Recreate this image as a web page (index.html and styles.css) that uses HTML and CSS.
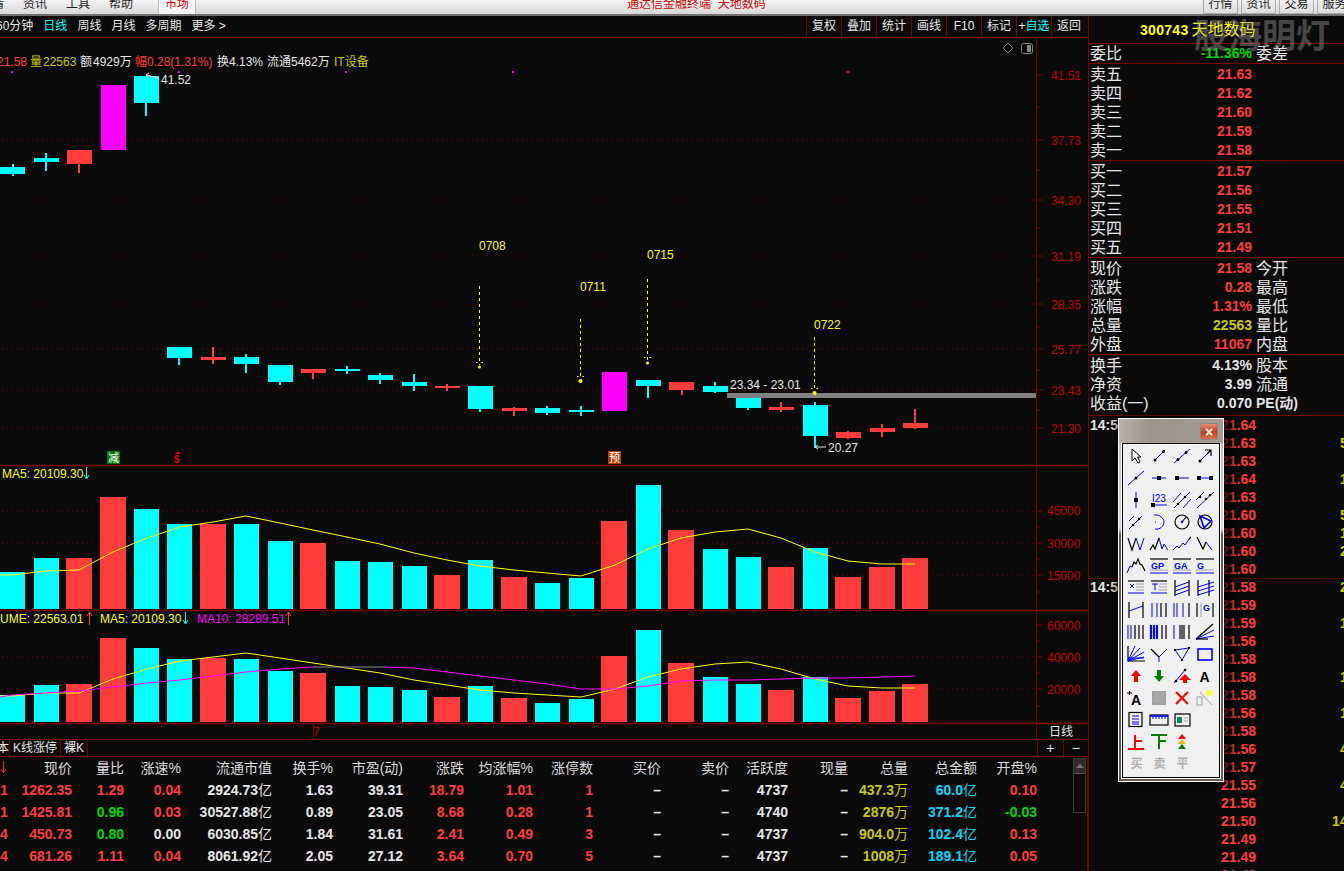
FILE: index.html
```html
<!DOCTYPE html>
<html lang="zh-CN">
<head>
<meta charset="utf-8">
<title>通达信金融终端 天地数码</title>
<link rel="stylesheet" href="styles.css">
</head>
<body>
<header class="topbar">
  <nav class="menu"><span class="m0">行情</span><span>资讯</span><span>工具</span><span>帮助</span><b class="tab">市场</b></nav>
  <div class="apptitle">通达信金融终端&nbsp;&nbsp;天地数码</div>
  <div class="topbtns"><span>行情</span><span>资讯</span><span>交易</span><span>服务</span></div>
</header>
<main class="workspace">
  <section class="left">
    <div class="toolbar">
      <div class="periods"><span class="p0">60分钟</span><span class="cy">日线</span><span>周线</span><span>月线</span><span>多周期</span><span>更多 &gt;</span></div>
      <div class="tools"><span>复权</span><span>叠加</span><span>统计</span><span>画线</span><span>F10</span><span>标记</span><span><i class="wt">+</i><i class="cy">自选</i></span><span>返回</span></div>
    </div>
    <svg class="chart" viewBox="0 38 1088 702" width="1088" height="702" xmlns="http://www.w3.org/2000/svg">
      <g class="grid">
        <path d="M2 140H1037M2 200H1037M2 256H1037M2 304H1037M2 349H1037M2 390H1037M2 428H1037M2 511H1037M2 543H1037M2 575H1037M2 657H1037M2 689H1037"/>
      </g>
      <g class="frame">
        <path d="M1036.5 38V757M1037 75H1043M1037 107H1041M1037 140H1043M1037 170H1041M1037 200H1043M1037 228H1041M1037 256H1043M1037 280H1041M1037 304H1043M1037 327H1041M1037 349H1043M1037 370H1041M1037 390H1043M1037 410H1041M1037 428H1043M1037 511H1043M1037 527H1041M1037 543H1043M1037 559H1041M1037 575H1043M1037 592H1041M1037 625H1043M1037 641H1041M1037 657H1043M1037 673H1041M1037 689H1043M1037 706H1041M313.5 724V740M0 739.5H1088"/>
        <path class="thick" d="M0 465.5H1088M0 610.5H1088M0 723.5H1088"/>
      </g>
      <g class="pink-dots"><rect x="11" y="71" width="2" height="2"/><rect x="178" y="71" width="2" height="2"/><rect x="345" y="71" width="2" height="2"/><rect x="512" y="71" width="2" height="2"/><rect x="847" y="71" width="2" height="2"/></g>

      <g class="axis">
        <text x="1051" y="80">41.51</text><text x="1051" y="145">37.73</text><text x="1051" y="205">34.30</text><text x="1051" y="261">31.19</text><text x="1051" y="309">28.35</text><text x="1051" y="354">25.77</text><text x="1051" y="395">23.43</text><text x="1051" y="433">21.30</text>
        <text x="1047" y="515">45000</text><text x="1047" y="548">30000</text><text x="1047" y="580">15000</text><text x="1047" y="630">60000</text><text x="1047" y="662">40000</text><text x="1047" y="694">20000</text>
        <text x="313" y="736" class="seven">7</text>
      </g>
      <text x="1049" y="736" class="dayl">日线</text>

      <g class="info">
        <text x="-3" y="66" class="r">21.58</text><text x="30" y="66" class="y">量</text><text x="43" y="66" class="y">22563</text>
        <text x="80" y="66" class="w">额</text><text x="93" y="66" class="w">4929万</text>
        <text x="135" y="66" class="r">幅</text><text x="147" y="66" class="r">0.28(1.31%)</text>
        <text x="217" y="66" class="w">换</text><text x="229" y="66" class="w">4.13%</text>
        <text x="267" y="66" class="w">流通</text><text x="291" y="66" class="w">5462万</text>
        <text x="334" y="66" class="y">IT设备</text>
      </g>

      <path class="diamond" d="M1008 43L1013 48L1008 53L1003 48Z"/>
      <rect class="toggle" x="1021.5" y="43.5" width="11" height="10" rx="2"/><rect class="togglef" x="1027" y="45" width="4" height="7"/>

      <g class="dn">
        <rect x="12" y="164" width="2" height="12"/><rect x="0" y="167" width="25" height="7"/>
        <rect x="45" y="153" width="2" height="18"/><rect x="34" y="158" width="25" height="4"/>
        <rect x="145" y="100" width="2" height="16"/><rect x="134" y="76" width="25" height="27"/>
        <rect x="178" y="355" width="2" height="10"/><rect x="167" y="347" width="25" height="11"/>
        <rect x="245" y="354" width="2" height="19"/><rect x="234" y="357" width="25" height="7"/>
        <rect x="279" y="380" width="2" height="5"/><rect x="268" y="365" width="25" height="17"/>
        <rect x="346" y="366" width="2" height="8"/><rect x="335" y="369" width="25" height="2"/>
        <rect x="379" y="373" width="2" height="11"/><rect x="368" y="375" width="25" height="5"/>
        <rect x="413" y="374" width="2" height="17"/><rect x="402" y="382" width="25" height="4"/>
        <rect x="479" y="405" width="2" height="7"/><rect x="468" y="386" width="25" height="23"/>
        <rect x="546" y="406" width="2" height="9"/><rect x="535" y="408" width="25" height="5"/>
        <rect x="580" y="406" width="2" height="10"/><rect x="569" y="410" width="25" height="2"/>
        <rect x="647" y="384" width="2" height="14"/><rect x="636" y="380" width="25" height="6"/>
        <rect x="714" y="382" width="2" height="11"/><rect x="703" y="386" width="25" height="6"/>
        <rect x="747" y="404" width="2" height="6"/><rect x="736" y="398" width="25" height="10"/>
        <rect x="814" y="402" width="2" height="46"/><rect x="803" y="405" width="25" height="31"/>
      </g>
      <g class="up">
        <rect x="78" y="160" width="2" height="13"/><rect x="67" y="150" width="25" height="14"/>
        <rect x="212" y="347" width="2" height="17"/><rect x="201" y="357" width="25" height="3"/>
        <rect x="312" y="372" width="2" height="7"/><rect x="301" y="369" width="25" height="4"/>
        <rect x="446" y="384" width="2" height="7"/><rect x="435" y="386" width="25" height="2"/>
        <rect x="513" y="407" width="2" height="9"/><rect x="502" y="408" width="25" height="3"/>
        <rect x="681" y="388" width="2" height="7"/><rect x="669" y="382" width="25" height="8"/>
        <rect x="780" y="402" width="2" height="10"/><rect x="769" y="407" width="25" height="3"/>
        <rect x="847" y="431" width="2" height="8"/><rect x="836" y="432" width="25" height="6"/>
        <rect x="881" y="424" width="2" height="13"/><rect x="870" y="428" width="25" height="4"/>
        <rect x="914" y="409" width="2" height="20"/><rect x="903" y="423" width="25" height="5"/>
      </g>
      <g class="mg"><rect x="101" y="85" width="25" height="65"/><rect x="602" y="372" width="25" height="39"/></g>

      <rect class="band" x="727" y="393" width="309" height="5"/>
      <text x="730" y="389" class="lbl">23.34 - 23.01</text>

      <g class="lbl">
        <text x="161" y="84">41.52</text>
        <text x="828" y="452">20.27</text>
      </g>
      <path class="lblline" d="M146 75L159 78M146 75L149 73M146 75L148 78M815 447H826M815 447L818 445M815 447L818 449"/>

      <g class="dash"><path d="M479.5 286V365M580.5 319V379M647.5 279V362M814.5 337V391"/></g>
      <path class="chev" d="M476 362.500H477.500M481.500 362.500H483M577 376.500H578.500M582.500 376.500H584M644 357.500H645.500M649.500 357.500H651M811 388.500H812.500M816.500 388.500H818"/>
      <g class="yl">
        <text x="479" y="250">0708</text><text x="580" y="291">0711</text><text x="647" y="259">0715</text><text x="814" y="329">0722</text>
        <circle cx="479.5" cy="367" r="1.5"/><circle cx="580.5" cy="381" r="2"/><circle cx="647.5" cy="363" r="1.5"/><circle cx="814.5" cy="393" r="2"/>
      </g>

      <rect class="mkg" x="107" y="451" width="13" height="13"/><text x="108" y="462" class="mkt">减</text>
      <text x="174" y="463" class="mks">$</text>
      <path class="mkh" d="M178 451L181 454H175Z"/>
      <rect class="mko" x="608" y="451" width="13" height="13"/><text x="609" y="462" class="mkt">预</text>

      <g class="bars-dn">
        <rect x="0" y="572" width="25" height="37"/><rect x="34" y="558" width="25" height="51"/><rect x="134" y="509" width="25" height="100"/><rect x="167" y="524" width="25" height="85"/><rect x="234" y="524" width="25" height="85"/><rect x="268" y="541" width="25" height="68"/><rect x="335" y="561" width="25" height="48"/><rect x="368" y="562" width="25" height="47"/><rect x="402" y="566" width="25" height="43"/><rect x="468" y="560" width="25" height="49"/><rect x="535" y="583" width="25" height="26"/><rect x="569" y="578" width="25" height="31"/><rect x="636" y="485" width="25" height="124"/><rect x="703" y="549" width="25" height="60"/><rect x="736" y="557" width="25" height="52"/><rect x="803" y="548" width="25" height="61"/>
        <rect x="0" y="695" width="25" height="27"/><rect x="34" y="685" width="25" height="37"/><rect x="134" y="648" width="25" height="74"/><rect x="167" y="659" width="25" height="63"/><rect x="234" y="659" width="25" height="63"/><rect x="268" y="671" width="25" height="51"/><rect x="335" y="686" width="25" height="36"/><rect x="368" y="687" width="25" height="35"/><rect x="402" y="690" width="25" height="32"/><rect x="468" y="686" width="25" height="36"/><rect x="535" y="703" width="25" height="19"/><rect x="569" y="699" width="25" height="23"/><rect x="636" y="630" width="25" height="92"/><rect x="703" y="677" width="25" height="45"/><rect x="736" y="684" width="25" height="38"/><rect x="803" y="677" width="25" height="45"/>
      </g>
      <g class="bars-up">
        <rect x="66" y="558" width="26" height="51"/><rect x="100" y="497" width="26" height="112"/><rect x="200" y="524" width="26" height="85"/><rect x="300" y="543" width="26" height="66"/><rect x="434" y="575" width="26" height="34"/><rect x="501" y="577" width="26" height="32"/><rect x="601" y="521" width="26" height="88"/><rect x="668" y="530" width="26" height="79"/><rect x="768" y="567" width="26" height="42"/><rect x="835" y="577" width="26" height="32"/><rect x="869" y="567" width="26" height="42"/><rect x="902" y="558" width="26" height="51"/>
        <rect x="66" y="684" width="26" height="38"/><rect x="100" y="638" width="26" height="84"/><rect x="200" y="658" width="26" height="64"/><rect x="300" y="673" width="26" height="49"/><rect x="434" y="697" width="26" height="25"/><rect x="501" y="698" width="26" height="24"/><rect x="601" y="656" width="26" height="66"/><rect x="668" y="663" width="26" height="59"/><rect x="768" y="690" width="26" height="32"/><rect x="835" y="698" width="26" height="24"/><rect x="869" y="691" width="26" height="31"/><rect x="902" y="684" width="26" height="38"/>
      </g>
      <polyline class="ma5" points="0,575 12,575 46,571 79,570 113,552 147,538 180,527 213,522 246,516 280,523 313,530 347,537 380,544 414,553 447,560 480,566 514,570 547,573 581,576 615,565 648,549 681,538 715,532 748,529 781,538 815,552 848,561 882,564 915,564"/>
      <polyline class="ma5" points="0,696 12,696 46,693 79,693 113,679 147,669 180,661 213,657 246,653 280,658 313,663 347,668 380,673 414,680 447,685 480,690 514,693 547,695 581,697 615,689 648,677 681,669 715,664 748,662 781,669 815,679 848,686 882,688 915,688"/>
      <polyline class="ma10" points="0,697 12,695 46,693 79,691 113,687 147,683 180,680 213,676 246,672 280,669 313,667"/>
      <polyline class="ma10g" points="313,667 385,667"/>
      <polyline class="ma10" points="385,667 414,668 447,672 480,676 514,680 547,684 581,689 615,689 648,686 681,681 715,680 748,680 781,679 815,678 848,678 882,677 915,676"/>

      <g class="ind">
        <text x="2" y="478" class="y2">MA5: 20109.30</text>
        <text x="-24" y="623" class="y2">VOLUME: 22563.01</text>
        <text x="100" y="623" class="y2">MA5: 20109.30</text>
        <text x="197" y="623" class="m2">MA10: 28289.51</text>
      </g>
      <path class="arr-c" d="M86.5 467V478M84 475L86.5 479L89 475"/>
      <path class="arr-r" d="M89.5 625V613M87 616L89.5 612L92 616"/>
      <path class="arr-c" d="M185.5 612V623M183 620L185.5 624L188 620"/>
      <path class="arr-r" d="M288.5 625V613M286 616L288.5 612L291 616"/>
    </svg>
    <div class="tabs">
      <div class="tablist"><span class="t0">本</span><span class="t1">K线涨停</span><span class="t2">裸K</span></div>
      <div class="zoombtn"><span>+</span><span>−</span></div>
    </div>
    <div class="table">
      <div class="row head">
        <span class="c0"><svg class="sortsvg" width="8" height="16" viewBox="0 0 8 16"><path class="sortarrow" d="M3.5 2V13M1 10L3.5 14L6 10"/></svg></span>
        <span>现价</span><span>量比</span><span>涨速%</span><span>流通市值</span><span>换手%</span><span>市盈(动)</span><span>涨跌</span><span>均涨幅%</span><span>涨停数</span><span>买价</span><span>卖价</span><span>活跃度</span><span>现量</span><span>总量</span><span>总金额</span><span>开盘%</span>
      </div>
      <div class="row">
        <span class="c0 red">1</span><span class="red">1262.35</span><span class="red">1.29</span><span class="red">0.04</span><span>2924.73<i>亿</i></span><span>1.63</span><span>39.31</span><span class="red">18.79</span><span class="red">1.01</span><span class="red">1</span><span>–</span><span>–</span><span>4737</span><span>–</span><span class="ylw">437.3<i>万</i></span><span class="cyn">60.0<i>亿</i></span><span class="red">0.10</span>
      </div>
      <div class="row">
        <span class="c0 red">1</span><span class="red">1425.81</span><span class="grn">0.96</span><span class="red">0.03</span><span>30527.88<i>亿</i></span><span>0.89</span><span>23.05</span><span class="red">8.68</span><span class="red">0.28</span><span class="red">1</span><span>–</span><span>–</span><span>4740</span><span>–</span><span class="ylw">2876<i>万</i></span><span class="cyn">371.2<i>亿</i></span><span class="grn">-0.03</span>
      </div>
      <div class="row">
        <span class="c0 red">4</span><span class="red">450.73</span><span class="grn">0.80</span><span>0.00</span><span>6030.85<i>亿</i></span><span>1.84</span><span>31.61</span><span class="red">2.41</span><span class="red">0.49</span><span class="red">3</span><span>–</span><span>–</span><span>4737</span><span>–</span><span class="ylw">904.0<i>万</i></span><span class="cyn">102.4<i>亿</i></span><span class="red">0.13</span>
      </div>
      <div class="row">
        <span class="c0 red">4</span><span class="red">681.26</span><span class="red">1.11</span><span class="red">0.04</span><span>8061.92<i>亿</i></span><span>2.05</span><span>27.12</span><span class="red">3.64</span><span class="red">0.70</span><span class="red">5</span><span>–</span><span>–</span><span>4737</span><span>–</span><span class="ylw">1008<i>万</i></span><span class="cyn">189.1<i>亿</i></span><span class="red">0.05</span>
      </div>
      <div class="scroll"><div class="sup"></div><div class="sthumb"></div></div>
    </div>
  </section>

  <aside class="panel">
    <div class="title"><b>300743</b><span>天地数码</span></div>
    <div class="block wbi"><div class="q"><span>委比</span><b class="grn">-11.36%</b><span>委差</span></div></div>
    <div class="block">
      <div class="q"><span>卖五</span><b class="red">21.63</b></div>
      <div class="q"><span>卖四</span><b class="red">21.62</b></div>
      <div class="q"><span>卖三</span><b class="red">21.60</b></div>
      <div class="q"><span>卖二</span><b class="red">21.59</b></div>
      <div class="q"><span>卖一</span><b class="red">21.58</b></div>
    </div>
    <div class="block">
      <div class="q"><span>买一</span><b class="red">21.57</b></div>
      <div class="q"><span>买二</span><b class="red">21.56</b></div>
      <div class="q"><span>买三</span><b class="red">21.55</b></div>
      <div class="q"><span>买四</span><b class="red">21.51</b></div>
      <div class="q"><span>买五</span><b class="red">21.49</b></div>
    </div>
    <div class="block">
      <div class="q"><span>现价</span><b class="red">21.58</b><span>今开</span></div>
      <div class="q"><span>涨跌</span><b class="red">0.28</b><span>最高</span></div>
      <div class="q"><span>涨幅</span><b class="red">1.31%</b><span>最低</span></div>
      <div class="q"><span>总量</span><b class="ylw">22563</b><span>量比</span></div>
      <div class="q"><span>外盘</span><b class="red">11067</b><span>内盘</span></div>
    </div>
    <div class="block last">
      <div class="q"><span>换手</span><b>4.13%</b><span>股本</span></div>
      <div class="q"><span>净资</span><b>3.99</b><span>流通</span></div>
      <div class="q"><span>收益(一)</span><b>0.070</b><span class="pe">PE(动)</span></div>
    </div>
    <div class="ticks">
      <div class="t"><b class="tm">14:50</b><b class="red">21.64</b><b class="v"></b></div>
      <div class="t"><b></b><b class="red">21.63</b><b class="v">5</b></div>
      <div class="t"><b></b><b class="red">21.63</b><b class="v"></b></div>
      <div class="t"><b></b><b class="red">21.64</b><b class="v">1</b></div>
      <div class="t"><b></b><b class="red">21.63</b><b class="v"></b></div>
      <div class="t"><b></b><b class="red">21.60</b><b class="v">5</b></div>
      <div class="t"><b></b><b class="red">21.60</b><b class="v">1</b></div>
      <div class="t"><b></b><b class="red">21.60</b><b class="v">2</b></div>
      <div class="t"><b></b><b class="red">21.60</b><b class="v"></b></div>
      <div class="t dotted"><b class="tm">14:55</b><b class="red">21.58</b><b class="v">2</b></div>
      <div class="t"><b></b><b class="red">21.59</b><b class="v"></b></div>
      <div class="t"><b></b><b class="red">21.59</b><b class="v">1</b></div>
      <div class="t"><b></b><b class="red">21.56</b><b class="v"></b></div>
      <div class="t"><b></b><b class="red">21.58</b><b class="v"></b></div>
      <div class="t"><b></b><b class="red">21.58</b><b class="v">1</b></div>
      <div class="t"><b></b><b class="red">21.58</b><b class="v"></b></div>
      <div class="t"><b></b><b class="red">21.56</b><b class="v">1</b></div>
      <div class="t"><b></b><b class="red">21.58</b><b class="v"></b></div>
      <div class="t"><b></b><b class="red">21.56</b><b class="v">4</b></div>
      <div class="t"><b></b><b class="red">21.57</b><b class="v"></b></div>
      <div class="t"><b></b><b class="red">21.55</b><b class="v">4</b></div>
      <div class="t"><b></b><b class="red">21.56</b><b class="v"></b></div>
      <div class="t"><b></b><b class="red">21.50</b><b class="v wide">14</b></div>
      <div class="t"><b></b><b class="red">21.49</b><b class="v"></b></div>
      <div class="t"><b></b><b class="red">21.49</b><b class="v"></b></div>
      <div class="t"><b></b><b class="red">21.48</b><b class="v"></b></div>
    </div>
    <div class="watermark">股海明灯</div>
  </aside>
</main>

<div class="toolbox">
  <div class="tb-head"><button class="tb-close" type="button">×</button></div>
  <div class="tb-body">
    <svg class="ic" viewBox="0 0 22 20"><path class="wk" d="M7 3V15L10 12L13 17L15 16L12.500 11H16Z"/></svg>
    <svg class="ic" viewBox="0 0 22 20"><path class="b" d="M6 15L17 4"/><circle class="kf" cx="7" cy="14" r="1.500"/><circle class="kf" cx="15.500" cy="5.500" r="1.500"/></svg>
    <svg class="ic" viewBox="0 0 22 20"><path class="b" d="M3 17L19 3"/><circle class="kf" cx="7" cy="13.500" r="1.500"/><circle class="kf" cx="15" cy="6.500" r="1.500"/></svg>
    <svg class="ic" viewBox="0 0 22 20"><path class="b" d="M6 15L16 5"/><circle class="kf" cx="6" cy="15" r="1.500"/><path class="k" d="M11 4H17V10M17 4L13 8"/></svg>

    <svg class="ic" viewBox="0 0 22 20"><path class="b" d="M3 17L19 3"/><circle class="kf" cx="11" cy="10" r="1.500"/></svg>
    <svg class="ic" viewBox="0 0 22 20"><path class="b" d="M4 10H18"/><rect class="kf" x="9" y="8" width="4" height="4"/></svg>
    <svg class="ic" viewBox="0 0 22 20"><path class="b" d="M6 10H18"/><rect class="kf" x="4" y="8" width="4" height="4"/></svg>
    <svg class="ic" viewBox="0 0 22 20"><path class="b" d="M5 10H17"/><rect class="kf" x="3" y="8" width="4" height="4"/><rect class="kf" x="15" y="8" width="4" height="4"/></svg>

    <svg class="ic" viewBox="0 0 22 20"><path class="b" d="M11 2V18"/><rect class="kf" x="9" y="8" width="4" height="4"/></svg>
    <svg class="ic" viewBox="0 0 22 20"><text class="ict" x="4" y="12">I23</text><path class="b" d="M5 15H19"/><rect class="kf" x="3" y="13" width="4" height="4"/></svg>
    <svg class="ic" viewBox="0 0 22 20"><path class="b" d="M2 12L10 3M3 18L19 2M12 18L20 9"/><circle class="kf" cx="7" cy="14" r="1.300"/><circle class="kf" cx="14" cy="7" r="1.300"/></svg>
    <svg class="ic" viewBox="0 0 22 20"><path class="b" d="M2 10L10 2M3 18L20 2"/><circle class="kf" cx="6" cy="7" r="1.300"/><circle class="kf" cx="12" cy="9" r="1.300"/><circle class="kf" cx="16" cy="5" r="1.300"/></svg>

    <svg class="ic" viewBox="0 0 22 20"><path class="b" d="M4 9L9 4M4 17L17 4"/><circle class="kf" cx="8" cy="13" r="1.300"/><circle class="kf" cx="14" cy="7" r="1.300"/></svg>
    <svg class="ic" viewBox="0 0 22 20"><path class="b" d="M6 3C11 2 16 6 16 10C16 14 12 18 7 17M7 10H8"/></svg>
    <svg class="ic" viewBox="0 0 22 20"><circle class="k" cx="11" cy="10" r="7"/><circle class="bf" cx="11" cy="10" r="1.300"/><path class="k" d="M11 10L15 5"/></svg>
    <svg class="ic" viewBox="0 0 22 20"><circle class="k" cx="11" cy="10" r="7"/><path class="b2" d="M6 4L17 9L10 16Z"/></svg>

    <svg class="ic" viewBox="0 0 22 20"><path class="k" d="M3 4L7 16L11 4"/><path class="b" d="M11 4L15 16L19 4"/></svg>
    <svg class="ic" viewBox="0 0 22 20"><path class="k" d="M2 16L5 11L7 15L11 4"/><path class="b" d="M11 4L14 15L16 10L20 16"/></svg>
    <svg class="ic" viewBox="0 0 22 20"><path class="b" d="M2 16L6 12L8 14L12 9L14 11L18 5"/><path class="k" d="M18 5L20 3"/></svg>
    <svg class="ic" viewBox="0 0 22 20"><path class="k" d="M3 3L9 15L12 8"/><path class="b" d="M12 8L18 16"/></svg>

    <svg class="ic" viewBox="0 0 22 20"><path class="b" d="M2 17L5 10L7 11"/><path class="k" d="M7 11L9 6L11 8L13 3L15 8L17 9L20 15"/></svg>
    <svg class="ic" viewBox="0 0 22 20"><path class="k" d="M2 3H20"/><text class="icb" x="3" y="13">GP</text><path class="g" d="M2 14H20"/><path class="b" d="M2 17H20"/></svg>
    <svg class="ic" viewBox="0 0 22 20"><path class="k" d="M2 3H20"/><text class="icb" x="3" y="13">GA</text><path class="g" d="M2 14H20"/><path class="b" d="M2 17H20"/></svg>
    <svg class="ic" viewBox="0 0 22 20"><path class="k" d="M2 3H20"/><text class="icb" x="3" y="13">G</text><path class="g" d="M2 14H20"/><path class="b" d="M2 17H20"/></svg>

    <svg class="ic" viewBox="0 0 22 20"><path class="k" d="M3 3H19"/><path class="g" d="M11 6H19M11 9H19M11 12H19"/><path class="b" d="M3 15H19"/><path class="b" d="M5 6L9 10M9 6L5 10"/></svg>
    <svg class="ic" viewBox="0 0 22 20"><path class="k" d="M3 3H19"/><path class="g" d="M11 6H19M11 9H19M11 12H19"/><path class="b" d="M3 15H19M4 6H10M7 6V12"/></svg>
    <svg class="ic" viewBox="0 0 22 20"><path class="k" d="M4 2V18M18 2V18"/><path class="b" d="M4 9L18 4M4 13L18 8M4 17L18 12"/></svg>
    <svg class="ic" viewBox="0 0 22 20"><path class="k" d="M4 2V18M15 2V18"/><path class="b" d="M4 9L20 4M4 13L20 8M4 17L20 12"/></svg>

    <svg class="ic" viewBox="0 0 22 20"><path class="k" d="M4 2V18M18 2V18"/><path class="b" d="M4 11L18 6"/></svg>
    <svg class="ic" viewBox="0 0 22 20"><path class="b" d="M4 3V17M9 3V17"/><path class="k" d="M13 3V17M18 3V17"/></svg>
    <svg class="ic" viewBox="0 0 22 20"><path class="b" d="M3 3V17M6 3V17M12 3V17"/><path class="k" d="M18 3V17"/></svg>
    <svg class="ic" viewBox="0 0 22 20"><path class="k" d="M3 3V17"/><path class="g" d="M7 3V17"/><path class="k" d="M19 3V17"/><text class="icb" x="9" y="11">G</text></svg>

    <svg class="ic" viewBox="0 0 22 20"><path class="b" d="M3 3V17M6 3V17"/><path class="k" d="M10 3V17M14 3V17M18 3V17"/></svg>
    <svg class="ic" viewBox="0 0 22 20"><path class="b3" d="M3 3V17M6 3V17M9 3V17"/><path class="k" d="M14 3V17M18 3V17"/></svg>
    <svg class="ic" viewBox="0 0 22 20"><path class="b" d="M3 3V17"/><path class="k" d="M9 3V17M11 3V17M13 3V17M18 3V17"/></svg>
    <svg class="ic" viewBox="0 0 22 20"><path class="k" d="M2 17L19 2"/><path class="b" d="M2 17L20 8M2 17L20 14"/><path class="k" d="M2 17H14"/></svg>

    <svg class="ic" viewBox="0 0 22 20"><path class="k" d="M3 2V17H20"/><path class="b" d="M3 17L10 2M3 17L15 4M3 17L19 8M3 17L19 13M3 14H19"/></svg>
    <svg class="ic" viewBox="0 0 22 20"><path class="k" d="M3 5L11 13"/><path class="b" d="M11 13L19 5M11 13V18"/></svg>
    <svg class="ic" viewBox="0 0 22 20"><path class="b" d="M4 6L18 4L11 16Z"/><rect class="kf" x="3" y="5" width="2" height="2"/><rect class="kf" x="17" y="3" width="2" height="2"/><rect class="kf" x="10" y="15" width="2" height="2"/></svg>
    <svg class="ic" viewBox="0 0 22 20"><rect class="b2" x="4" y="5" width="14" height="11"/></svg>

    <svg class="ic" viewBox="0 0 22 20"><path class="rf" d="M11 4L16 10H13V16H9V10H6Z"/></svg>
    <svg class="ic" viewBox="0 0 22 20"><path class="gf" d="M9 4H13V10H16L11 16L6 10H9Z"/></svg>
    <svg class="ic" viewBox="0 0 22 20"><path class="b" d="M3 17L15 3"/><circle class="kf" cx="5" cy="15" r="1.300"/><circle class="kf" cx="14" cy="4" r="1.300"/><path class="rf" d="M14 8L20 14H16V17H12V14H8Z"/></svg>
    <svg class="ic" viewBox="0 0 22 20"><text class="icA" x="5.500" y="16">A</text></svg>

    <svg class="ic" viewBox="0 0 22 20"><path class="k" d="M2 5H7M4.500 3V7"/><text class="icA" x="6" y="17">A</text></svg>
    <svg class="ic" viewBox="0 0 22 20"><rect class="gb" x="5" y="4" width="12" height="12"/></svg>
    <svg class="ic" viewBox="0 0 22 20"><path class="x" d="M5 4L17 16M17 4L5 16"/></svg>
    <svg class="ic" viewBox="0 0 22 20"><rect class="g" x="3" y="9" width="5" height="8"/><path class="g" d="M6 4L18 17"/><circle class="yf" cx="15" cy="5" r="3"/></svg>

    <svg class="ic" viewBox="0 0 22 20"><rect class="k" x="4" y="2.500" width="13" height="14"/><path class="b" d="M7 6H14M7 9H14M7 12H14M7 14H14"/></svg>
    <svg class="ic" viewBox="0 0 22 20"><rect class="k" x="2" y="5" width="18" height="10"/><path class="b2" d="M2 6H20"/><path class="b" d="M5 6V9M8 6V9M11 6V9M14 6V9M17 6V9"/></svg>
    <svg class="ic" viewBox="0 0 22 20"><rect class="k" x="4" y="4" width="15" height="12"/><rect class="gf2" x="6" y="7" width="5" height="6"/><path class="g" d="M13 8H17M13 11H17"/></svg>
    <span></span>

    <svg class="ic" viewBox="0 0 22 20"><path class="r2" d="M10 3V16M10 9H17M3 17H19"/></svg>
    <svg class="ic" viewBox="0 0 22 20"><path class="g2" d="M3 3H19M11 3V17M11 9H18"/></svg>
    <svg class="ic" viewBox="0 0 22 20"><path class="rf" d="M11 2L15 7H7Z"/><path class="of" d="M11 7L15 12H7Z"/><path class="gf" d="M11 12L15 17H7Z"/></svg>
    <span></span>

    <span class="gt">买</span><span class="gt">卖</span><span class="gt">平</span><span></span>
  </div>
</div>
</body>
</html>
```
FILE: styles.css
```css
* { box-sizing: border-box; }
html, body { margin: 0; padding: 0; }
body {
  width: 1344px; height: 871px; overflow: hidden; position: relative;
  background: #0a0a0a; color: #e6e6e6;
  font-family: "Liberation Sans", "Noto Sans CJK SC", sans-serif; font-size: 12px;
}
i { font-style: normal; }

/* top window bar */
.topbar {
  height: 16px; display: flex; position: relative; overflow: hidden;
  background: linear-gradient(#f4f4f4, #d8d8d8);
  border-bottom: 2px solid #707070; color: #222; font-size: 12px; line-height: 8px;
}
.menu { display: flex; align-items: flex-start; }
.menu span { margin-right: 15px; margin-left: 4px; width: 24px; white-space: nowrap; }
.menu .m0 { margin-left: -20px; }
.menu .tab {
  font-weight: 400; color: #e00000; width: 38px; height: 14px; text-align: center;
  margin-left: 10px; background: #f6f6f6; border: solid #bbb; border-width: 0 1px 0 1px;
}
.apptitle { position: absolute; left: 627px; top: 0; color: #d00000; font-size: 12px; white-space: nowrap; }
.topbtns { position: absolute; left: 1203px; top: 0; display: flex; gap: 3px; }
.topbtns span {
  width: 35px; height: 14px; text-align: center; flex: none;
  background: linear-gradient(#f0f0f0, #ddd); border: solid #aaa; border-width: 0 1px 1px;
}

.workspace { display: flex; height: 855px; }
.left { width: 1088px; flex: none; position: relative; }

.toolbar {
  height: 22px; display: flex; justify-content: space-between;
  border-bottom: 1px solid #7a0000; line-height: 21px; overflow: hidden;
}
.periods { display: flex; gap: 10px; margin-left: -4px; }
.cy { color: #00ffff; }
.wt { color: #e6e6e6; }
.tools { display: flex; padding-right: 2px; }
.tools span { width: 35px; text-align: center; border-left: 1px solid #7a0000; white-space: nowrap; }

.chart { display: block; }
.chart text { font-family: "Liberation Sans", "Noto Sans CJK SC", sans-serif; font-size: 12px; }
.grid path { stroke: #800000; stroke-width: 1; stroke-dasharray: 1 4; fill: none; }
.frame path { stroke: #7a0000; stroke-width: 1; fill: none; }
.frame .thick { stroke-width: 1.5; }
.pink-dots rect { fill: #ff00ff; }
.axis text { fill: #c00000; }
.dayl { fill: #e6e6e6; }
.info .r { fill: #ff3c3c; }
.info .y { fill: #c8c800; }
.info .w { fill: #e6e6e6; }
.diamond { fill: none; stroke: #888; }
.toggle { fill: none; stroke: #888; }
.togglef { fill: #888; }
.dn rect, .bars-dn rect { fill: #00ffff; }
.up rect, .bars-up rect { fill: #ff3c3c; }
.mg rect { fill: #ff00ff; }
.band { fill: #808080; }
text.lbl, .lbl text { fill: #e6e6e6; }
.lblline { stroke: #e6e6e6; fill: none; }
.dash path { stroke: #ffff00; stroke-dasharray: 3 3; fill: none; }
.chev { stroke: #ffff00; fill: none; }
.yl text { fill: #ffff00; }
.yl circle { fill: #ffff00; }
.mkg { fill: #0a7a0a; }
.mko { fill: #b84000; }
.chart .mkt { fill: #fff; font-size: 11px; }
.chart .mks { fill: #e00000; font-weight: 700; font-size: 10px; }
.mkh { fill: #e00000; }
.ma5 { fill: none; stroke: #ffff00; stroke-width: 1; }
.ma10 { fill: none; stroke: #ff00ff; stroke-width: 1; }
.ma10g { fill: none; stroke: #888; stroke-width: 1; }
.y2 { fill: #ffff00; }
.m2 { fill: #ff00ff; }
.arr-c { stroke: #00ffff; fill: none; }
.arr-r { stroke: #ff3c3c; fill: none; }

.tabs {
  height: 17px; display: flex; justify-content: space-between;
  border-bottom: 1px solid #7a0000; line-height: 16px;
}
.tablist { display: flex; }
.tablist span { text-align: center; border-right: 1px solid #7a0000; white-space: nowrap; overflow: hidden; }
.t0 { width: 10px; direction: rtl; }
.t1 { width: 51px; }
.t2 { width: 27px; }
.zoombtn { display: flex; width: 51px; border-left: 1px solid #7a0000; }
.zoombtn span { flex: 1; text-align: center; font-size: 14px; }
.zoombtn span + span { border-left: 1px solid #7a0000; }

.table { position: relative; font-size: 14px; border-right: 1px solid #7a0000; height: 114px; }
.row {
  display: grid; height: 22px; line-height: 22px; text-align: right; font-weight: 700;
  grid-template-columns: 8px 64px 52px 57px 91px 61px 70px 61px 69px 60px 68px 68px 59px 60px 60px 69px 60px;
}
.row span { white-space: nowrap; }
.row i { font-weight: 400; }
.head { font-weight: 400; color: #dcdcdc; }
.head span { font-size: 14px; }
.c0 { padding-right: 4px; overflow: hidden; text-align: right; }
.head .c0 { padding: 0; text-align: left; }
.sortsvg { display: block; margin-top: 2px; }
.sortarrow { stroke: #ff2020; fill: none; }
.red { color: #ff3c3c; }
.grn { color: #00d800; }
.ylw { color: #c8c800; }
.cyn { color: #00d8f8; }

.scroll { position: absolute; left: 1073px; top: 1px; width: 13px; height: 55px; border: 1px solid #3a3a3a; }
.sup { height: 15px; background: #2c2c2c; border-bottom: 1px solid #555; position: relative; }
.sup::after { content: ""; position: absolute; left: 2px; top: 5px; border: 4px solid transparent; border-bottom-color: #777; border-top-width: 0; }

/* quote panel */
.panel {
  width: 256px; flex: none; position: relative; overflow: hidden; height: 855px;
  border-left: 1px solid #7a0000; font-size: 16px;
}
.title {
  height: 28px; border-bottom: 1px solid #7a0000; color: #ffff00; padding-left: 51px;
  line-height: 27px; white-space: nowrap;
}
.title b { font-size: 14px; letter-spacing: .3px; margin-right: 3px; }
.block { border-bottom: 1px solid #7a0000; padding-top: 1px; }
.wbi { height: 20px; padding-top: 0; }
.last { padding-bottom: 2px; }
.q { display: grid; grid-template-columns: 30px 132px 90px; height: 19px; line-height: 19px; padding-left: 1px; white-space: nowrap; }
.q b { font-size: 14px; text-align: right; grid-column: 2; }
.q b + span { padding-left: 4px; }
.q .pe { font-size: 14px; font-weight: 700; }
.ticks { font-size: 14px; }
.t { display: grid; grid-template-columns: 40px 126px 88px; height: 18px; line-height: 18px; padding-left: 1px; white-space: nowrap; }
.t b:nth-child(2) { text-align: right; }
.tm { color: #e6e6e6; }
.dotted { border-top: 1px dotted #a00000; line-height: 16px; }
.v { color: #c8c800; padding-left: 84px; }
.wide { padding-left: 76px; }
.watermark {
  position: absolute; left: 105px; top: 0; font-size: 34px; font-weight: 700;
  color: rgba(160,160,160,.42); white-space: nowrap; pointer-events: none; line-height: 40px;
}

/* floating drawing tools */
.toolbox {
  position: absolute; left: 1118px; top: 418px; width: 106px; height: 364px;
  border: 1px solid #fff; box-shadow: 8px 0 8px rgba(0,0,0,.7), -4px 0 6px rgba(0,0,0,.4);
  background: linear-gradient(#b8b4ae 0, #d8d8d8 30%, #e4e4e4 30%, #6b5a4c 32%, #6b5a4c 100%);
  padding: 0 3px 3px;
}
.tb-head {
  height: 24px; margin: 0 -3px; position: relative;
  background: linear-gradient(90deg, #b8b2aa, #9c958c 30%, #a49c94);
}
.tb-close {
  position: absolute; left: 81px; top: 4px; width: 18px; height: 17px; padding: 0;
  border: 1px solid #888; border-radius: 2px; color: #fff; font: 700 14px/14px "Liberation Sans", sans-serif;
  background: linear-gradient(#e88a6e, #c03a20 55%, #e07050);
}
.tb-body {
  display: grid; grid-template-columns: repeat(4, 23px); grid-auto-rows: 22px; justify-content: center;
  height: 335px; border: 1px solid #000; background: #f0f0f0; padding-top: 1px;
  outline: 1px solid #fff;
}
.ic { width: 22px; height: 20px; margin: 1px 0 0 0; display: block; }
.ic .b { stroke: #0000ff; fill: none; }
.ic .b2 { stroke: #0000ff; stroke-width: 1.6; fill: none; }
.ic .b3 { stroke: #0000ff; stroke-width: 2.2; fill: none; }
.ic .k { stroke: #000; fill: none; stroke-width: 1.2; }
.ic .wk { stroke: #000; fill: #fff; }
.ic .kf { fill: #000; }
.ic .bf { fill: #0000ff; }
.ic .g { stroke: #a0a0a0; fill: none; }
.ic .gb { stroke: #a0a0a0; stroke-width: 2; fill: #a8a8a8; }
.ic .rf { fill: #ff0000; }
.ic .gf { fill: #008000; }
.ic .of { fill: #e8c000; }
.ic .yf { fill: #ffff20; }
.ic .gf2 { fill: #0a8a6a; }
.ic .x { stroke: #ff0000; stroke-width: 2; fill: none; }
.ic .r2 { stroke: #ff0000; stroke-width: 2; fill: none; }
.ic .g2 { stroke: #008000; stroke-width: 2; fill: none; }
.ict { font: 10px "Liberation Sans", sans-serif; fill: #0000ff; }
.icb { font: 700 9px "Liberation Sans", sans-serif; fill: #0000ff; }
.icA { font: 700 14px "Liberation Sans", sans-serif; fill: #000; }
.gt { color: #b0b0b0; font-size: 12px; font-weight: 700; line-height: 22px; text-align: center; }
```
